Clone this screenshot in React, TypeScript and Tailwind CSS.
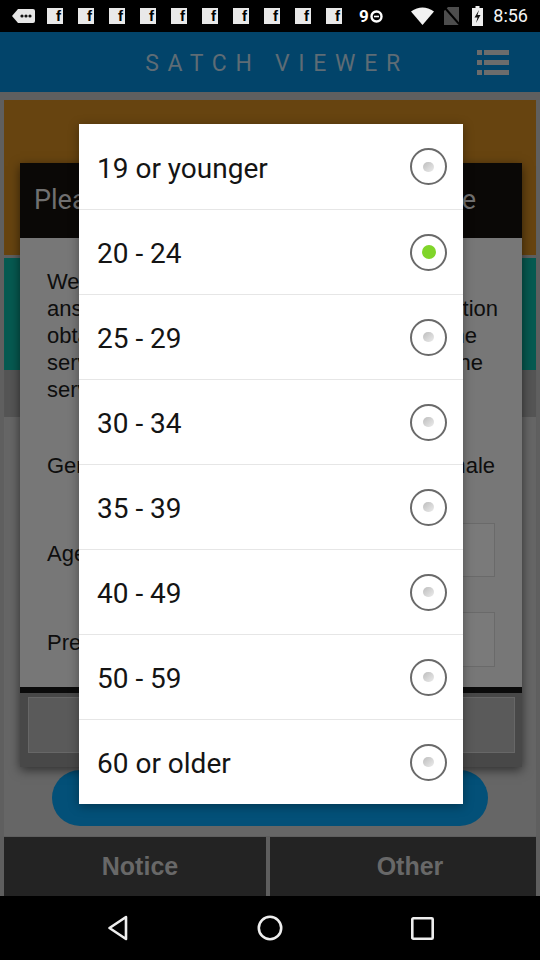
import React from "react";

const ages = [
  "19 or younger",
  "20 - 24",
  "25 - 29",
  "30 - 34",
  "35 - 39",
  "40 - 49",
  "50 - 59",
  "60 or older",
];

const selectedAge = "20 - 24";

// status bar bits
function FbIcon() {
  return (
    <span className="w-[16px] h-[16px] bg-[#e9e9e9] flex items-end justify-end pr-[2px]">
      <span className="text-[15px] leading-[16px] font-bold text-black font-['Liberation_Sans',Arial,sans-serif]">f</span>
    </span>
  );
}

function StatusBar() {
  return (
    <div className="h-[32px] bg-black flex items-center pl-[12px] pr-[12px] text-white">
      <svg width="23" height="14" viewBox="0 0 23 14">
        <path d="M6 0H21a2 2 0 0 1 2 2V12a2 2 0 0 1-2 2H6L0 7Z" fill="#e6e6e6" />
        <circle cx="10" cy="7" r="1.6" fill="#111" />
        <circle cx="14" cy="7" r="1.6" fill="#111" />
        <circle cx="18" cy="7" r="1.6" fill="#111" />
      </svg>
      <div className="flex items-center gap-[15px] ml-[12px]">
        {Array.from({ length: 10 }).map((_, i) => (
          <FbIcon key={i} />
        ))}
      </div>
      <div className="flex items-center ml-[17px] gap-[1px]">
        <span className="text-[17px] font-bold leading-[18px] font-['Roboto',sans-serif]">9</span>
        <svg width="13" height="13" viewBox="0 0 13 13">
          <circle cx="6.5" cy="6.5" r="5" fill="none" stroke="#fff" strokeWidth="2.4" />
          <path d="M4 6.5h5" stroke="#fff" strokeWidth="1.6" />
        </svg>
      </div>
      <div className="ml-auto flex items-center">
        <svg width="23" height="18" viewBox="0 0 23 18">
          <path d="M11.5 18L0 4.5Q11.5 -3.5 23 4.5Z" fill="#f2f2f2" />
        </svg>
        <svg width="16" height="18" viewBox="0 0 16 18" className="ml-[10px]">
          <path d="M4 0H15V18H0V4Z" fill="#4d4d4d" />
          <path d="M1 1L15.5 17.5" stroke="#000" strokeWidth="2" />
        </svg>
        <svg width="11" height="20" viewBox="0 0 11 20" className="ml-[12px]">
          <path d="M3.5 0H7.5V2H11V20H0V2H3.5Z" fill="#eeeeee" />
          <path d="M7 4L2.5 11.5H5.5L4 17L8.5 9H5.5Z" fill="#111" />
        </svg>
        <span className="ml-[10px] text-[18px] leading-[20px] font-['Roboto',sans-serif] text-[#f4f4f4]">8:56</span>
      </div>
    </div>
  );
}

function Header() {
  return (
    <div className="h-[60px] bg-[#02446a] grid grid-cols-[1fr_auto_1fr] items-center">
      <div />
      <span className="ml-[14px] mt-[5px] text-[23px] tracking-[8.7px] text-[#5e6c75] font-['Roboto',sans-serif]">
        SATCH VIEWER
      </span>
      <div className="justify-self-end mr-[31px] flex flex-col gap-[5px]">
        {[0, 1, 2].map((i) => (
          <div key={i} className="flex items-center gap-[2px]">
            <span className="w-[5px] h-[5px] bg-[#6c6c6c]" />
            <span className="w-[25px] h-[5px] bg-[#6c6c6c]" />
          </div>
        ))}
      </div>
    </div>
  );
}

const bodyLines: [string, string, string][] = [
  ["We would like you to", "", "mr-0"],
  ["answer a few", "information", "mr-[-3px]"],
  ["obtained will be", "the", "mr-[18px]"],
  ["service and", "the", "mr-[12px]"],
  ["service.", "", "mr-0"],
];

// the dimmed survey dialog lying behind the age picker
function SurveyDialog() {
  return (
    <div className="absolute left-[20px] top-[163px] w-[502px] h-[604px] flex flex-col shadow-[0_3px_10px_rgba(0,0,0,0.55)]">
      <div className="h-[75px] bg-[#0a0806] pl-[14px] pr-[46px] flex items-center justify-between text-[27px] text-[#707070] font-['Roboto',sans-serif] whitespace-nowrap">
        <span>Please fill out the</span>
        <span>questionnaire</span>
      </div>
      <div className="h-[449px] bg-[#777777] pl-[27px] pr-[27px] pt-[30px] flex flex-col text-[22px] text-[#0e0e0e] font-['Liberation_Sans',Arial,sans-serif]">
        <div className="leading-[27px]">
          {bodyLines.map(([l, r, m], i) => (
            <div key={i} className="flex justify-between whitespace-nowrap">
              <span>{l}</span>
              <span className={m}>{r}</span>
            </div>
          ))}
        </div>
        <div className="mt-[42px] h-[40px] flex items-center justify-between">
          <span>Gender</span>
          <span>Female</span>
        </div>
        <div className="mt-[38px] flex items-center justify-between">
          <span className="mt-[6px]">Age</span>
          <span className="w-[190px] h-[54px] border border-[#6a6a6a] bg-[#7a7a7a]" />
        </div>
        <div className="mt-[35px] flex items-center justify-between">
          <span className="mt-[6px]">Prefecture</span>
          <span className="w-[190px] h-[55px] border border-[#6a6a6a] bg-[#7a7a7a]" />
        </div>
      </div>
      <div className="h-[6px] bg-[#0b0b0b]" />
      <div className="h-[74px] bg-[#484848] pl-[8px] pr-[7px] pt-[4px]">
        <div className="h-[56px] bg-[#5a5a5a] border border-[#676767]" />
      </div>
    </div>
  );
}

function Radio({ checked }: { checked: boolean }) {
  return (
    <span className="w-[37px] h-[37px] rounded-full border-2 border-[#6a6a6a] bg-white flex items-center justify-center">
      {checked ? (
        <span className="w-[14px] h-[14px] rounded-full bg-[#80d52a]" />
      ) : (
        <span className="w-[11px] h-[10px] rounded-full bg-linear-to-br from-[#bdbdbd] to-[#ececec]" />
      )}
    </span>
  );
}

function AgePicker() {
  return (
    <div className="absolute left-[79px] top-[124px] w-[384px] bg-white shadow-[0_2px_10px_rgba(0,0,0,0.35)] font-['Roboto',sans-serif]">
      {ages.map((age, i) => (
        <div
          key={age}
          className={`h-[85px] pl-[18px] pr-[16px] flex items-center justify-between ${i > 0 ? "border-t border-[#e6e6e6]" : ""}`}
        >
          <span className="text-[28px] text-[#141414] mt-[4px]">{age}</span>
          <Radio checked={age === selectedAge} />
        </div>
      ))}
    </div>
  );
}

export default function App() {
  return (
    <div className="relative w-[540px] h-[960px] overflow-hidden bg-black">
      <StatusBar />
      <Header />

      {/* page under the dialogs (dimmed) */}
      <div className="h-[744px] bg-[#5f5f5f] pt-[8px] pl-[4px] pr-[4px] flex flex-col">
        <div className="h-[155px] bg-[#674410]" />
        <div className="h-[112px] mt-[3px] bg-[#065a51]" />
        <div className="h-[47px] bg-[#555555]" />
        <div className="flex-1 bg-[#666666] pt-[353px]">
          <div className="ml-[48px] w-[436px] h-[56px] rounded-full bg-[#035078]" />
        </div>
      </div>

      <div className="h-[60px] bg-[#5e5e5e] px-[4px] pt-[1px] flex gap-[4px] font-['Liberation_Sans',Arial,sans-serif]">
        <div className="flex-1 bg-[#232323] flex items-center justify-center pl-[10px] text-[25px] font-bold text-[#686868]">
          Notice
        </div>
        <div className="flex-1 bg-[#232323] flex items-center justify-center pl-[14px] text-[25px] font-bold text-[#686868]">
          Other
        </div>
      </div>

      <div className="h-[64px] bg-black flex items-center justify-center">
        <div className="w-[152px] flex justify-center">
          <svg width="24" height="26" viewBox="0 0 24 26">
            <path d="M20 2L3.5 13L20 24Z" fill="none" stroke="#eeeeee" strokeWidth="2.6" strokeLinejoin="round" />
          </svg>
        </div>
        <div className="w-[152px] flex justify-center">
          <svg width="26" height="26" viewBox="0 0 26 26">
            <circle cx="13" cy="13" r="11.2" fill="none" stroke="#eeeeee" strokeWidth="2.6" />
          </svg>
        </div>
        <div className="w-[152px] flex justify-center">
          <svg width="23" height="23" viewBox="0 0 23 23">
            <rect x="1.3" y="1.3" width="20.4" height="20.4" rx="1" fill="none" stroke="#eeeeee" strokeWidth="2.6" />
          </svg>
        </div>
      </div>

      <SurveyDialog />
      <AgePicker />
    </div>
  );
}
